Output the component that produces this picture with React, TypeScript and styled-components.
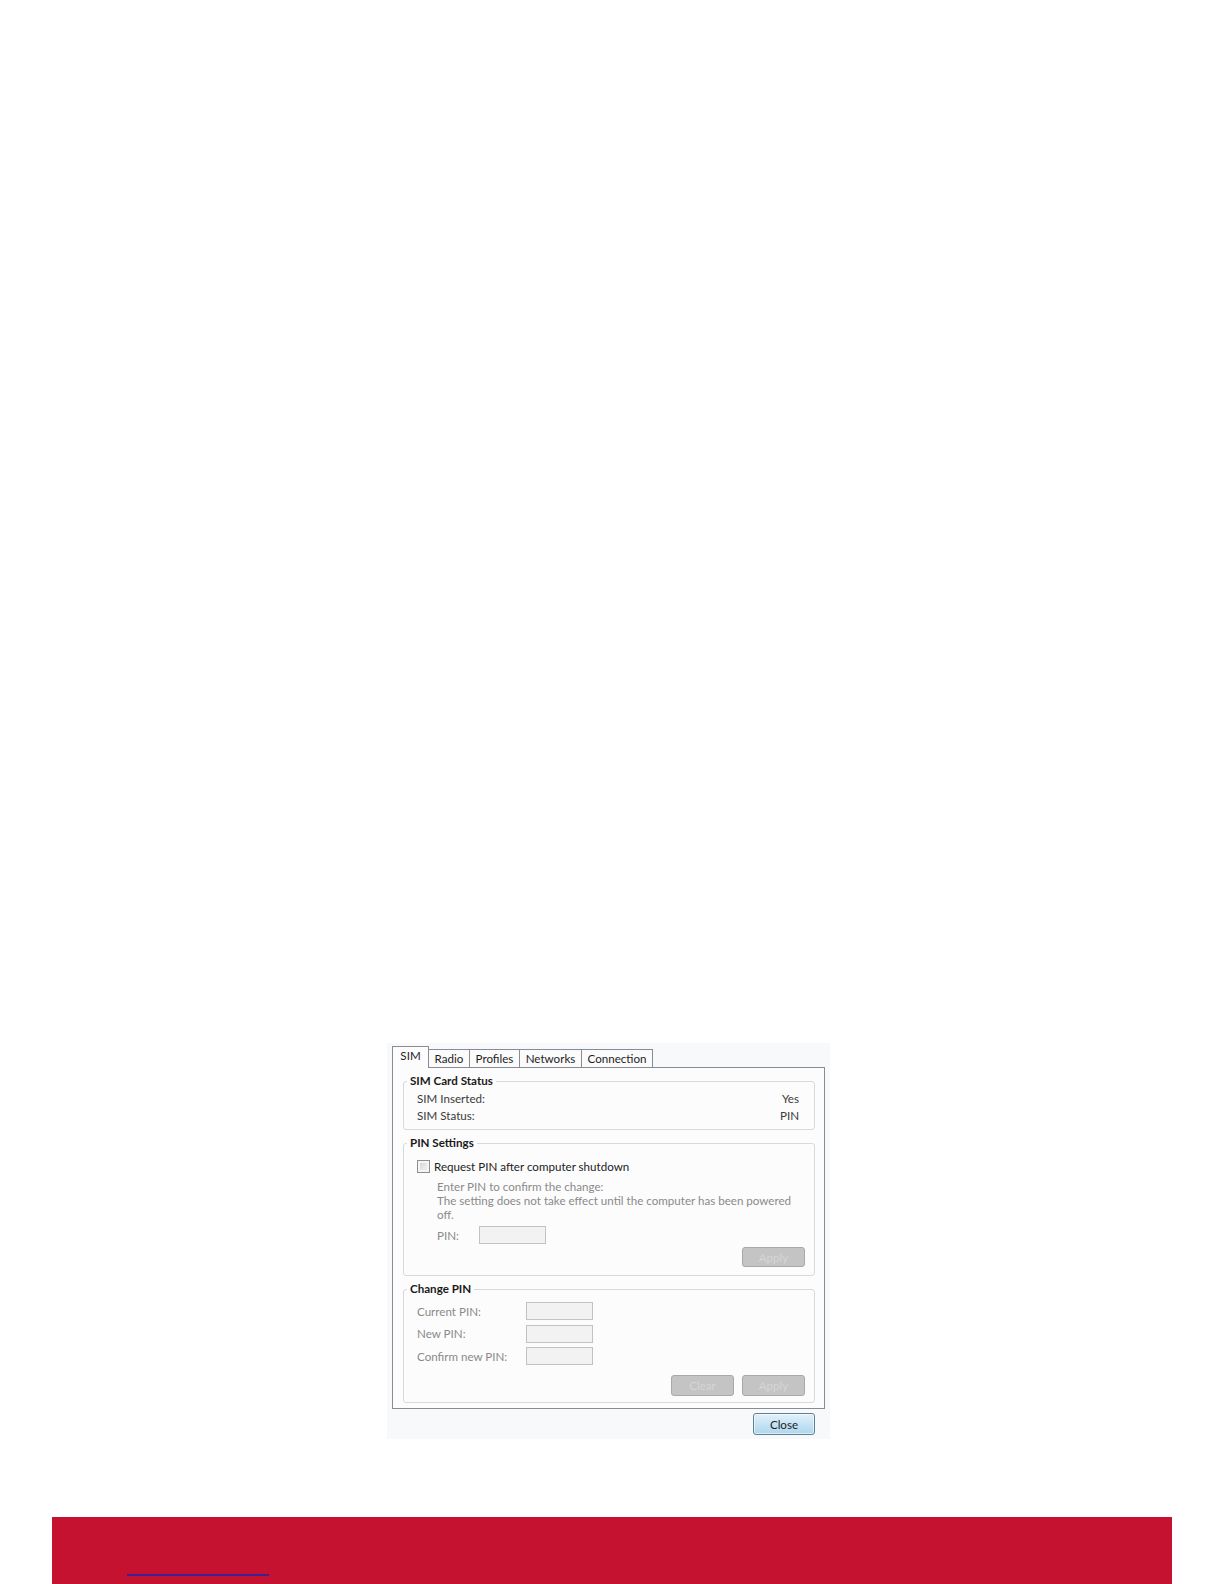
import React from 'react';
import styled, { createGlobalStyle } from 'styled-components';

const GlobalStyle = createGlobalStyle`
  html, body {
    margin: 0;
    padding: 0;
    background: #ffffff;
  }
  body {
    font-family: Lato, "Open Sans", "Liberation Sans", sans-serif;
  }
`;

const Page = styled.div`
  width: 1224px;
  height: 1584px;
  box-sizing: border-box;
  padding-top: 1043px;
  display: flex;
  flex-direction: column;
  overflow: hidden;
  background: #ffffff;
`;

const Dialog = styled.div`
  margin-left: 387px;
  width: 443px;
  box-sizing: border-box;
  padding: 3px 5px 4px;
  background: #f8f9fa;
  font-family: Lato, "Open Sans", "Liberation Sans", sans-serif;
  font-size: 11.6px;
  color: #2b2b2b;
`;

const TabStrip = styled.div`
  display: flex;
  align-items: flex-end;
  height: 21px;
`;

const Tab = styled.div<{ $w: number; $active?: boolean }>`
  position: relative;
  z-index: ${(p) => (p.$active ? 2 : 1)};
  width: ${(p) => p.$w}px;
  height: ${(p) => (p.$active ? 22 : 18)}px;
  box-sizing: border-box;
  margin-left: -1px;
  margin-bottom: ${(p) => (p.$active ? -1 : 0)}px;
  border: 1px solid #898c95;
  border-bottom: none;
  background: ${(p) => (p.$active ? '#fcfcfc' : '#fbfbfb')};
  display: flex;
  justify-content: center;
  align-items: ${(p) => (p.$active ? 'flex-start' : 'center')};
  padding-top: ${(p) => (p.$active ? 1 : 0)}px;
  line-height: 16px;
  color: #1e1e1e;

  &:first-child {
    margin-left: 0;
  }
`;

const Panel = styled.div`
  border: 1px solid #898c95;
  background: #fcfcfc;
  padding: 5px 9px 5px 10px;
  display: flex;
  flex-direction: column;
  gap: 5px;
`;

const Group = styled.fieldset`
  margin: 0;
  padding: 0;
  min-width: 0;
  border: 1px solid #d3dbe0;
  border-radius: 3px;
`;

const Legend = styled.legend`
  margin-left: 3px;
  padding: 0 3px;
  font-weight: 700;
  line-height: 16px;
  color: #1a1a1a;
`;

const GroupBody = styled.div<{ $pad: string }>`
  padding: ${(p) => p.$pad};
  display: flex;
  flex-direction: column;
`;

const StatusRow = styled.div`
  display: flex;
  justify-content: space-between;
  height: 17px;
  line-height: 17px;
  color: #3a3a3a;
`;

const CheckRow = styled.label`
  display: flex;
  align-items: center;
  gap: 4px;
  height: 16px;
  margin-top: 7px;
  color: #222222;
`;

const CheckBox = styled.span`
  width: 13px;
  height: 13px;
  box-sizing: border-box;
  border: 1px solid #8e8f8f;
  background: linear-gradient(135deg, #cbcbcb 0%, #e9e9e9 60%, #f4f4f4 100%);
  box-shadow: inset 0 0 0 2px #f4f4f4;
`;

const Note = styled.div`
  margin: 6px 0 0 20px;
  line-height: 14px;
  color: #8a8a8a;
  white-space: nowrap;
`;

const FieldRow = styled.div<{ $label: number; $indent?: number; $top?: number }>`
  display: grid;
  grid-template-columns: ${(p) => p.$label}px auto;
  align-items: center;
  height: 18px;
  margin-left: ${(p) => p.$indent ?? 0}px;
  margin-top: ${(p) => p.$top ?? 0}px;
  color: #8a8a8a;
`;

const FieldStack = styled.div`
  display: flex;
  flex-direction: column;
  gap: 4.5px;
  margin-top: 5px;
`;

const TextBox = styled.input`
  width: 67px;
  height: 18px;
  box-sizing: border-box;
  margin: 0;
  border: 1px solid #c2c2c2;
  background: #f2f2f2;
  padding: 0 3px;
`;

const ButtonRow = styled.div<{ $top: number }>`
  display: flex;
  justify-content: flex-end;
  gap: 8px;
  margin-top: ${(p) => p.$top}px;
`;

const DisabledButton = styled.button<{ $h: number }>`
  width: 63px;
  height: ${(p) => p.$h}px;
  box-sizing: border-box;
  margin: 0;
  padding: 0;
  border: 1px solid #a9a9a9;
  border-radius: 3px;
  background: #c4c4c4;
  color: #d6d6d6;
  font-family: inherit;
  font-size: 11.6px;
`;

const Footer = styled.div`
  display: flex;
  justify-content: flex-end;
  margin-top: 4px;
  padding-right: 10px;
`;

const CloseButton = styled.button`
  width: 62px;
  height: 22px;
  box-sizing: border-box;
  margin: 0;
  padding: 0;
  border: 1px solid #5f7f95;
  border-radius: 3px;
  background: linear-gradient(180deg, #e3f1fa 0%, #c6e3f4 50%, #aed6ee 100%);
  box-shadow: inset 0 0 0 1px rgba(255, 255, 255, 0.55);
  color: #1e1e1e;
  font-family: inherit;
  font-size: 11.6px;
`;

const RedBar = styled.div`
  margin: auto 0 0 52px;
  width: 1120px;
  height: 67px;
  flex-shrink: 0;
  box-sizing: border-box;
  padding: 57px 0 0 75px;
  background: #c41230;
`;

const LinkLine = styled.a`
  display: block;
  width: 142px;
  height: 0;
  border-bottom: 2px solid #3f1f97;
`;

const tabs = [
  { label: 'SIM', w: 37, active: true },
  { label: 'Radio', w: 42 },
  { label: 'Profiles', w: 51 },
  { label: 'Networks', w: 63 },
  { label: 'Connection', w: 72 },
];

const App: React.FC = () => {
  return (
    <>
      <GlobalStyle />
      <Page>
        <Dialog>
          <TabStrip>
            {tabs.map((t) => (
              <Tab key={t.label} $w={t.w} $active={t.active}>
                {t.label}
              </Tab>
            ))}
          </TabStrip>

          <Panel>
            <Group>
              <Legend>SIM Card Status</Legend>
              <GroupBody $pad="1px 15px 5px 13px">
                <StatusRow>
                  <span>SIM Inserted:</span>
                  <span>Yes</span>
                </StatusRow>
                <StatusRow>
                  <span>SIM Status:</span>
                  <span>PIN</span>
                </StatusRow>
              </GroupBody>
            </Group>

            <Group>
              <Legend>PIN Settings</Legend>
              <GroupBody $pad="0 9px 8px 13px">
                <CheckRow>
                  <CheckBox />
                  <span>Request PIN after computer shutdown</span>
                </CheckRow>
                <Note>
                  Enter PIN to confirm the change:
                  <br />
                  The setting does not take effect until the computer has been powered
                  <br />
                  off.
                </Note>
                <FieldRow $label={42} $indent={20} $top={4}>
                  <span>PIN:</span>
                  <TextBox disabled />
                </FieldRow>
                <ButtonRow $top={3}>
                  <DisabledButton $h={20} disabled>
                    Apply
                  </DisabledButton>
                </ButtonRow>
              </GroupBody>
            </Group>

            <Group>
              <Legend>Change PIN</Legend>
              <GroupBody $pad="0 9px 6px 13px">
                <FieldStack>
                  <FieldRow $label={109}>
                    <span>Current PIN:</span>
                    <TextBox disabled />
                  </FieldRow>
                  <FieldRow $label={109}>
                    <span>New PIN:</span>
                    <TextBox disabled />
                  </FieldRow>
                  <FieldRow $label={109}>
                    <span>Confirm new PIN:</span>
                    <TextBox disabled />
                  </FieldRow>
                </FieldStack>
                <ButtonRow $top={10}>
                  <DisabledButton $h={21} disabled>
                    Clear
                  </DisabledButton>
                  <DisabledButton $h={21} disabled>
                    Apply
                  </DisabledButton>
                </ButtonRow>
              </GroupBody>
            </Group>
          </Panel>

          <Footer>
            <CloseButton>Close</CloseButton>
          </Footer>
        </Dialog>

        <RedBar>
          <LinkLine href="#" aria-label="link" />
        </RedBar>
      </Page>
    </>
  );
};

export default App;
